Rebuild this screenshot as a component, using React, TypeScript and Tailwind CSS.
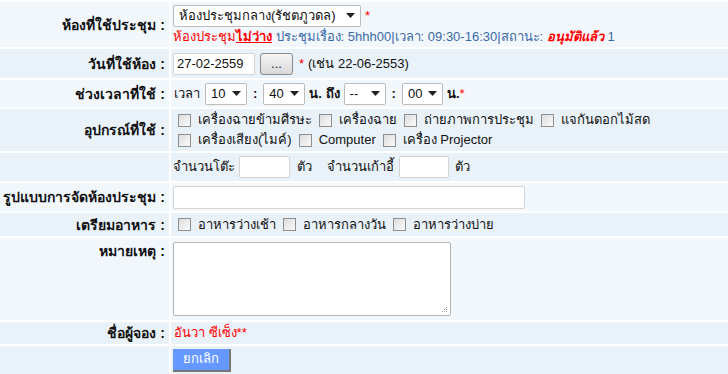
import type { ReactNode } from 'react'

const Row = ({
  label,
  children,
  dark,
  top,
  className,
}: {
  label?: string
  children: ReactNode
  dark?: boolean
  top?: boolean
  className?: string
}) => {
  return (
    <div
      className={`flex border-b-2 border-white ${dark ? 'bg-[#e9f1f9]' : 'bg-[#f2f7fc]'} ${className ?? ''}`}
    >
      <div
        className={`flex w-[171px] shrink-0 justify-end whitespace-nowrap border-r-2 border-white pr-[4px] text-[14px] font-bold text-[#111] ${top ? 'items-start pt-[5px]' : 'items-center'}`}
      >
        {label}
      </div>
      <div className="flex flex-1 flex-col justify-center pl-[2px]">{children}</div>
    </div>
  )
}

const Select = ({ value, w }: { value: string; w: string }) => (
  <span
    className={`inline-flex h-[22px] items-center justify-between rounded-[2px] border border-[#bcbcbc] bg-white pl-[5px] pr-[5px] text-[#111] ${w}`}
  >
    <span>{value}</span>
    <svg width="9" height="5" viewBox="0 0 9 5">
      <path d="M0 0h9L4.5 5z" fill="#222" />
    </svg>
  </span>
)

const Check = ({ label }: { label: string }) => (
  <span className="inline-flex items-center">
    <span className="mx-[5px] inline-block h-[13px] w-[13px] border border-[#8e8f8f] bg-gradient-to-br from-[#dcdcdc] to-[#fbfbfb]" />
    <span className="ml-[2px] mr-[2px]">{label}</span>
  </span>
)

const TextBox = ({ w, h = 'h-[22px]', value }: { w: string; h?: string; value?: string }) => (
  <span
    className={`inline-flex items-center rounded-[2px] border border-[#d4d4d4] bg-white pl-[3px] text-[#111] ${w} ${h}`}
  >
    {value}
  </span>
)

export default function App() {
  return (
    <div className="h-[374px] w-[728px] overflow-hidden border-t-2 border-white bg-[#e9f1f9] font-['Tahoma','Liberation_Sans',sans-serif] text-[13px] leading-[16px] text-[#333]">
      <Row label="ห้องที่ใช้ประชุม :" className="h-[47px]">
        <div className="flex items-center">
          <Select value="ห้องประชุมกลาง(รัชตภูวดล)" w="w-[188px]" />
          <span className="ml-[4px] text-[#ff0000]">*</span>
        </div>
        <div className="mt-[2px] whitespace-nowrap text-[#3a6aa6]">
          <span className="text-[#ff0000]">ห้องประชุม</span>
          <span className="font-bold text-[#ff0000] underline">ไม่ว่าง</span> ประชุมเรื่อง: 5hhh00|เวลา:
          09:30-16:30|สถานะ: <span className="font-bold italic text-[#ff0000]">อนุมัติแล้ว</span> 1
        </div>
      </Row>

      <Row label="วันที่ใช้ห้อง :" dark className="h-[31px]">
        <div className="flex items-center">
          <TextBox w="w-[82px]" value="27-02-2559" />
          <span className="ml-[5px] inline-flex h-[22px] w-[33px] items-center justify-center rounded-[3px] border border-[#8a8a8a] bg-gradient-to-b from-[#f6f6f6] to-[#d9d9d9] text-[#111]">
            ...
          </span>
          <span className="ml-[6px] text-[#ff0000]">*</span>
          <span className="ml-[4px] text-[#111]">(เช่น 22-06-2553)</span>
        </div>
      </Row>

      <Row label="ช่วงเวลาที่ใช้ :" className="h-[29px]">
        <div className="flex items-center text-[#111]">
          <span className="ml-[1px] mr-[5px]">เวลา</span>
          <Select value="10" w="w-[42px]" />
          <span className="mx-[6px] font-bold">:</span>
          <Select value="40" w="w-[42px]" />
          <span className="ml-[4px] mr-[4px] font-bold">น. ถึง</span>
          <Select value="--" w="w-[42px]" />
          <span className="mx-[6px] font-bold">:</span>
          <Select value="00" w="w-[41px]" />
          <span className="ml-[4px] font-bold">น.</span>
          <span className="text-[#ff0000]">*</span>
        </div>
      </Row>

      <Row label="อุปกรณ์ที่ใช้ :" dark className="h-[44px]">
        <div className="flex flex-col gap-[4px] text-[#111]">
          <div className="flex items-center">
            <Check label="เครื่องฉายข้ามศีรษะ" />
            <Check label="เครื่องฉาย" />
            <Check label="ถ่ายภาพการประชุม" />
            <Check label="แจกันดอกไม้สด" />
          </div>
          <div className="flex items-center">
            <Check label="เครื่องเสียง(ไมค์)" />
            <Check label="Computer" />
            <Check label="เครื่อง Projector" />
          </div>
        </div>
      </Row>

      <Row dark className="h-[30px]">
        <div className="flex items-center text-[#111]">
          <span className="mr-[4px]">จำนวนโต๊ะ</span>
          <TextBox w="w-[51px]" />
          <span className="ml-[7px] mr-[15px]">ตัว</span>
          <span className="mr-[5px]">จำนวนเก้าอี้</span>
          <TextBox w="w-[50px]" />
          <span className="ml-[6px]">ตัว</span>
        </div>
      </Row>

      <Row label="รูปแบบการจัดห้องประชุม :" className="h-[30px]">
        <div className="flex items-center">
          <TextBox w="w-[352px]" h="h-[23px]" />
        </div>
      </Row>

      <Row label="เตรียมอาหาร :" dark className="h-[25px]">
        <div className="flex items-center text-[#111]">
          <Check label="อาหารว่างเช้า" />
          <Check label="อาหารกลางวัน" />
          <Check label="อาหารว่างบ่าย" />
        </div>
      </Row>

      <Row label="หมายเหตุ :" top className="h-[84px]">
        <div className="relative h-[74px] w-[278px] rounded-[2px] border border-[#b5b5b5] bg-white">
          <svg className="absolute bottom-[2px] right-[2px]" width="7" height="7" viewBox="0 0 7 7">
            <g fill="#9a9a9a">
              <rect x="5" y="1" width="1" height="1" />
              <rect x="3" y="3" width="1" height="1" />
              <rect x="5" y="3" width="1" height="1" />
              <rect x="1" y="5" width="1" height="1" />
              <rect x="3" y="5" width="1" height="1" />
              <rect x="5" y="5" width="1" height="1" />
            </g>
          </svg>
        </div>
      </Row>

      <Row label="ชื่อผู้จอง :" dark className="h-[24px]">
        <div className="pl-[1px] text-[#ff0000]">อันวา ซีเซ็ง**</div>
      </Row>

      <Row dark className="h-[30px] border-b-0">
        <div className="flex items-center">
          <span className="inline-flex h-[23px] w-[58px] items-center justify-center border-b-2 border-r-2 border-b-[#777] border-r-[#777] bg-[#6699ff] text-white">
            ยกเลิก
          </span>
        </div>
      </Row>
    </div>
  )
}
